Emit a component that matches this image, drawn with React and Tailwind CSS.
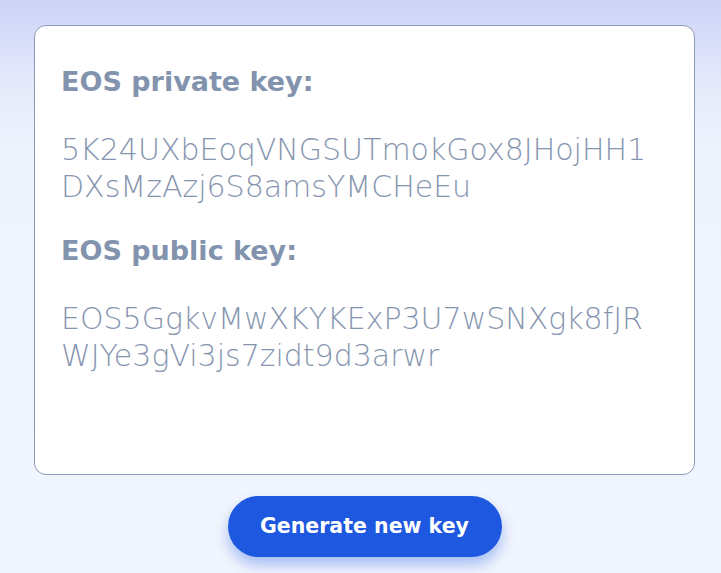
const KEYS = [
  { label: "EOS private key:", value: "5K24UXbEoqVNGSUTmokGox8JHojHH1DXsMzAzj6S8amsYMCHeEu" },
  { label: "EOS public key:", value: "EOS5GgkvMwXKYKExP3U7wSNXgk8fJRWJYe3gVi3js7zidt9d3arwr" },
];

export default function App() {
  return (
    <div className="min-h-screen bg-[linear-gradient(180deg,#cdd4f8_0px,#e6ebfb_90px,#eff3fd_160px,#f1f5fd_573px)] font-['DejaVu_Sans',sans-serif] pt-[25px] px-[34px] pr-[26px]">
      {/* Key card */}
      <div className="h-[450px] rounded-[12px] border border-[#8a9ab9] bg-white px-[26px] pt-[36px]">
        {KEYS.map(({ label, value }) => (
          <div key={label} className="mb-[26px]">
            <h2 className="text-[27px] font-bold leading-[40px] text-[#8293ae]">{label}</h2>
            <p className="mt-[29px] w-[596px] break-all text-[30px] font-extralight leading-[37px] text-[#8695af]">
              {value}
            </p>
          </div>
        ))}
      </div>

      <div className="flex justify-center pt-[21px]">
        <button className="h-[61px] w-[274px] rounded-full bg-[#1e57e0] text-[20.5px] font-bold text-white shadow-[0_8px_14px_rgba(30,87,224,0.35)]">
          Generate new key
        </button>
      </div>
    </div>
  );
}
